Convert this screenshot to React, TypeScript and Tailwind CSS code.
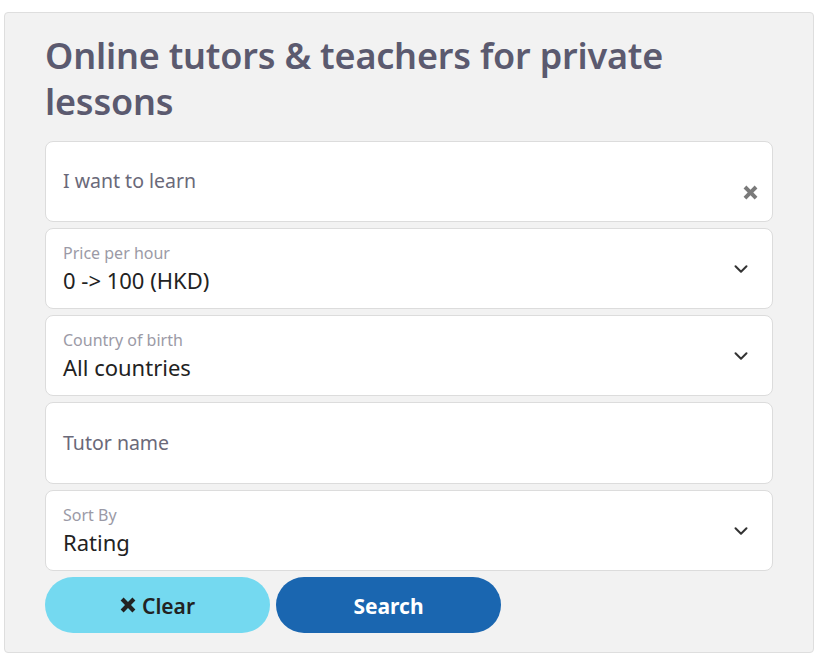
import { ChevronDown } from "lucide-react"

const fontStack = { fontFamily: '"Noto Sans", "Open Sans", sans-serif' }

// croix épaisse, façon "times" de FontAwesome
function XIcon({ className }: { className?: string }) {
  return (
    <svg viewBox="0 0 16 16" className={className} fill="currentColor">
      <path d="M3.6 0.6 8 5 12.4 0.6 15.4 3.6 11 8 15.4 12.4 12.4 15.4 8 11 3.6 15.4 0.6 12.4 5 8 0.6 3.6Z" />
    </svg>
  )
}

function SelectField({ label, value }: { label: string; value: string }) {
  return (
    <div className="h-[81px] bg-white border border-[#dcdcdc] rounded-[8px] flex items-center pl-[17px] pr-[20px]">
      <div className="flex-1 flex flex-col pt-[2px]">
        <span className="text-[16px] leading-[22px] text-[#9b9aa6]">{label}</span>
        <span className="text-[22px] leading-[33px] text-[#222222]">{value}</span>
      </div>
      <ChevronDown size={22} strokeWidth={2.2} className="text-[#333]" />
    </div>
  )
}

export default function App() {
  return (
    <div className="bg-white w-[820px] h-[665px] pt-[12px] pl-[4px]" style={fontStack}>
      <div className="w-[810px] h-[641px] bg-[#f2f2f2] border border-[#dedede] rounded-[4px] px-[40px] pt-[20px]">
        <h1 className="text-[36px] leading-[46px] font-semibold text-[#5b5a6f] tracking-[-0.2px]">
          Online tutors &amp; teachers for private lessons
        </h1>
        <div className="mt-[16px] flex flex-col gap-[6px]">
          <div className="h-[81px] bg-white border border-[#dcdcdc] rounded-[8px] flex pl-[17px] pr-[14px]">
            <span className="flex-1 pt-[26px] text-[19.5px] leading-[26px] text-[#6a6979]">I want to learn</span>
            <XIcon className="w-[15px] h-[15px] text-[#7a7a7a] mt-[43px]" />
          </div>
          <SelectField label="Price per hour" value="0 -> 100 (HKD)" />
          <SelectField label="Country of birth" value="All countries" />
          <div className="h-[82px] bg-white border border-[#dcdcdc] rounded-[8px] flex items-center pl-[17px]">
            <span className="text-[19.5px] text-[#6a6979]">Tutor name</span>
          </div>
          <SelectField label="Sort By" value="Rating" />
          <div className="flex gap-[6px]">
            <button className="w-[225px] h-[56px] rounded-full bg-[#74d9f0] text-[#222] text-[21px] font-semibold flex items-center justify-center gap-[6px] pt-[3px]">
              <XIcon className="w-[16px] h-[16px] -mt-[3px]" />
              Clear
            </button>
            <button className="w-[225px] h-[56px] rounded-full bg-[#1a66b0] text-white text-[21px] font-bold flex items-center justify-center pt-[3px]">
              Search
            </button>
          </div>
        </div>
      </div>
    </div>
  )
}
